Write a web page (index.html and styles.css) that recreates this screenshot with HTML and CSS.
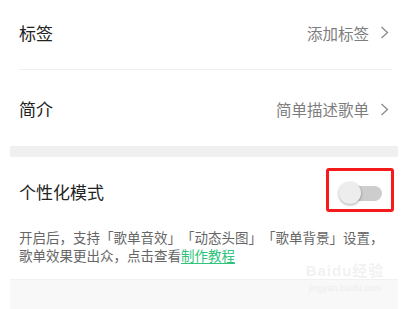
FILE: index.html
```html
<!DOCTYPE html>
<html lang="zh">
<head>
<meta charset="utf-8">
<link rel="stylesheet" href="styles.css">
</head>
<body>
<div class="page">
  <div class="row row-first">
    <span class="label">标签</span>
    <span class="value">添加标签<svg class="chev" width="9" height="13" viewBox="0 0 9 13"><polyline points="1.5,1 7.5,6.5 1.5,12" fill="none" stroke="#8a8a8a" stroke-width="1.3"/></svg></span>
  </div>
  <div class="row row-second">
    <span class="label">简介</span>
    <span class="value">简单描述歌单<svg class="chev" width="9" height="13" viewBox="0 0 9 13"><polyline points="1.5,1 7.5,6.5 1.5,12" fill="none" stroke="#8a8a8a" stroke-width="1.3"/></svg></span>
  </div>
  <div class="band"></div>
  <div class="row row-third">
    <span class="label">个性化模式</span>
    <div class="switch">
      <div class="track"></div>
      <div class="knob"></div>
      <div class="mark"></div>
    </div>
  </div>
  <p class="desc">开启后，支持「歌单音效」「动态头图」「歌单背景」设置，<br>歌单效果更出众，点击查看<a class="link">制作教程</a></p>
  <div class="bottom"></div>
  <div class="wm">
    <div class="wm1">Bai<span class="du">du</span>经验</div>
    <div class="wm2">jingyan.baidu.com</div>
  </div>
</div>
</body>
</html>
```

FILE: styles.css
```css
html, body {
  margin: 0;
  padding: 0;
  background: #fff;
}
body {
  font-family: "Noto Sans CJK SC", "Noto Sans", sans-serif;
  width: 412px;
  height: 309px;
  overflow: hidden;
  text-spacing-trim: space-all;
}
.page {
  position: relative;
  margin-left: 10px;
  width: 388px;
  height: 309px;
}
.row {
  display: flex;
  align-items: center;
  justify-content: space-between;
  padding: 0 9px 0 9px;
  box-sizing: border-box;
}
.row-first {
  height: 70px;
  padding-bottom: 4px;
  margin: 0 6px 0 9px;
  border-bottom: 1px solid #efefef;
  padding-left: 0;
  padding-right: 3px;
}
.row-second {
  height: 76px;
  padding-top: 2px;
}
.row-third {
  height: 70px;
  padding-right: 16px;
}
.label {
  font-size: 17px;
  color: #222;
  line-height: 20px;
}
.value {
  display: flex;
  align-items: center;
  font-size: 15.5px;
  color: #7d7d7d;
  line-height: 20px;
}
.chev {
  margin-left: 11px;
}
.band {
  height: 11px;
  background: #f0f0f0;
}
.switch {
  position: relative;
  width: 43px;
  height: 22px;
  margin-top: 1px;
}
.track {
  position: absolute;
  left: 2px;
  right: 0;
  top: 4px;
  height: 15px;
  border-radius: 8px;
  background: #cdcdcd;
}
.knob {
  position: absolute;
  left: 0;
  top: 0;
  width: 22px;
  height: 22px;
  border-radius: 50%;
  background: #ededed;
  box-shadow: 0 1px 3px rgba(0,0,0,0.35);
}
.mark {
  position: absolute;
  left: -13px;
  right: -12px;
  top: -14px;
  bottom: -8px;
  border: 3px solid #f61a1a;
  border-radius: 3px;
}
.desc {
  margin: 0;
  padding: 1px 0 0 9px;
  font-size: 13.5px;
  line-height: 18px;
  color: #666;
  height: 51px;
  white-space: nowrap;
  text-spacing-trim: space-all;
}
.link {
  color: #2fc37c;
  text-decoration: underline;
  text-underline-offset: 2px;
}
.bottom {
  height: 29px;
  background: #f8f8f8;
  border-top: 1px solid #f0f0f0;
}
.wm {
  position: absolute;
  left: 285px;
  top: 262px;
  width: 100px;
  text-align: center;
  color: rgba(215,215,215,0.35);
  font-family: "Liberation Sans", "Noto Sans CJK SC", sans-serif;
}
.wm1 {
  font-size: 15px;
  font-weight: bold;
  line-height: 18px;
  letter-spacing: 1px;
}
.wm2 {
  font-size: 9px;
  line-height: 12px;
  margin-top: 2px;
}
```
